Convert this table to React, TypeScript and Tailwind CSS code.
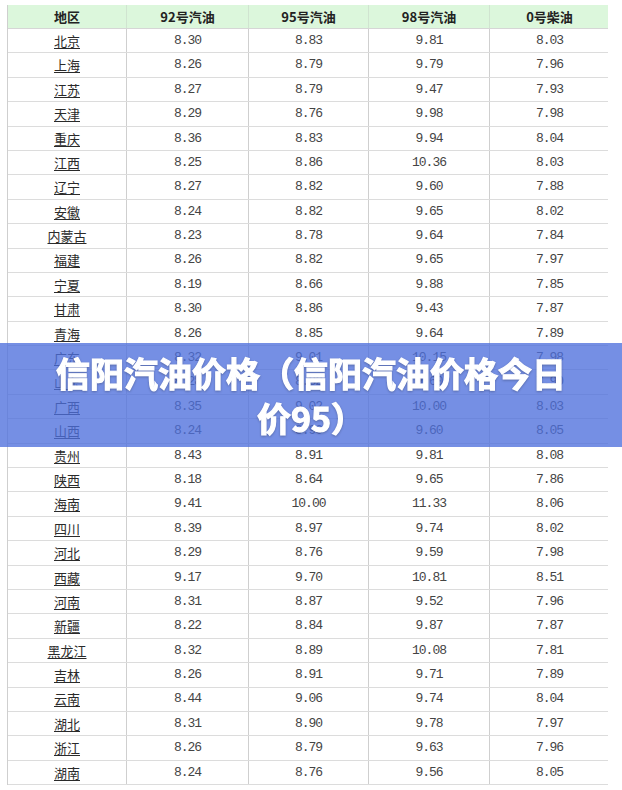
import React from "react";

type Row = [string, string, string, string, string];

const rows: Row[] = [
  ["北京", "8.30", "8.83", "9.81", "8.03"],
  ["上海", "8.26", "8.79", "9.79", "7.96"],
  ["江苏", "8.27", "8.79", "9.47", "7.93"],
  ["天津", "8.29", "8.76", "9.98", "7.98"],
  ["重庆", "8.36", "8.83", "9.94", "8.04"],
  ["江西", "8.25", "8.86", "10.36", "8.03"],
  ["辽宁", "8.27", "8.82", "9.60", "7.88"],
  ["安徽", "8.24", "8.82", "9.65", "8.02"],
  ["内蒙古", "8.23", "8.78", "9.64", "7.84"],
  ["福建", "8.26", "8.82", "9.65", "7.97"],
  ["宁夏", "8.19", "8.66", "9.88", "7.85"],
  ["甘肃", "8.30", "8.86", "9.43", "7.87"],
  ["青海", "8.26", "8.85", "9.64", "7.89"],
  ["广东", "8.32", "9.01", "10.15", "7.98"],
  ["山东", "8.28", "8.82", "9.60", "7.90"],
  ["广西", "8.35", "9.02", "10.00", "8.03"],
  ["山西", "8.24", "8.90", "9.60", "8.05"],
  ["贵州", "8.43", "8.91", "9.81", "8.08"],
  ["陕西", "8.18", "8.64", "9.65", "7.86"],
  ["海南", "9.41", "10.00", "11.33", "8.06"],
  ["四川", "8.39", "8.97", "9.74", "8.02"],
  ["河北", "8.29", "8.76", "9.59", "7.98"],
  ["西藏", "9.17", "9.70", "10.81", "8.51"],
  ["河南", "8.31", "8.87", "9.52", "7.96"],
  ["新疆", "8.22", "8.84", "9.87", "7.87"],
  ["黑龙江", "8.32", "8.89", "10.08", "7.81"],
  ["吉林", "8.26", "8.91", "9.71", "7.89"],
  ["云南", "8.44", "9.06", "9.74", "8.04"],
  ["湖北", "8.31", "8.90", "9.78", "7.97"],
  ["浙江", "8.26", "8.79", "9.63", "7.96"],
  ["湖南", "8.24", "8.76", "9.56", "8.05"],
];

const headers = ["地区", "92号汽油", "95号汽油", "98号汽油", "0号柴油"];

const cols = "grid grid-cols-[119px_122px_120px_121px_119px]";

export default function App() {
  return (
    <div
      className="relative w-[622px] h-[790px] overflow-hidden bg-white"
      style={{ fontFamily: '"Noto Sans CJK SC", "Liberation Sans", sans-serif' }}
    >
      <div className="ml-[7px] mt-[5px] w-[601px] border-l border-[#cfcfcf]">
        <div className={`${cols} h-[24px] bg-[#dcf7dc] border-b border-[#d6d6d6]`}>
          {headers.map((h, i) => (
            <div
              key={h}
              className={`flex items-center justify-center text-[13px] font-bold text-[#222] ${
                i < 4 ? "border-r border-[#d0e4d0]" : ""
              }`}
            >
              {h}
            </div>
          ))}
        </div>
        {rows.map((r) => (
          <div key={r[0]} className={`${cols} h-[24.4px] border-b border-[#dcdcdc]`}>
            <div className="flex items-center justify-center border-r border-[#cfcfcf] text-[13px] text-[#2a2a2a] underline underline-offset-2">
              {r[0]}
            </div>
            {r.slice(1).map((v, i) => (
              <div
                key={i}
                className={`flex items-center justify-center text-[13px] tracking-[-1px] text-[#444] ${
                  i < 3 ? "border-r border-[#cfcfcf]" : ""
                }`}
                style={{ fontFamily: '"Liberation Mono", monospace' }}
              >
                {v}
              </div>
            ))}
          </div>
        ))}
      </div>

      {/* title banner over the table */}
      <div className="absolute left-0 right-0 top-[343px] h-[104px] bg-[rgba(78,112,220,0.78)] flex items-center justify-center px-4">
        <h1 className="text-center text-[34px] leading-[45px] font-bold text-white [-webkit-text-stroke:1.2px_white] drop-shadow-[0_1px_1px_rgba(0,0,0,0.25)]">
          信阳汽油价格（信阳汽油价格今日
          <br />
          价95）
        </h1>
      </div>
    </div>
  );
}
